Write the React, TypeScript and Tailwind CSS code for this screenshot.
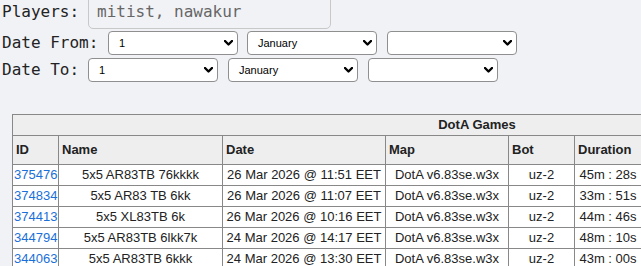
import React from "react";

const mono = { fontFamily: '"DejaVu Sans Mono", monospace' };

function Chevron() {
  return (
    <svg width="9" height="6" viewBox="0 0 9 6" className="shrink-0">
      <path d="M1 1 L4.5 4.5 L8 1" fill="none" stroke="#000" strokeWidth="2.4" strokeLinecap="round" strokeLinejoin="round" />
    </svg>
  );
}

function Sel({ text, className = "" }: { text: string; className?: string }) {
  return (
    <div
      className={`flex h-[24px] w-[130px] items-center justify-between rounded-[4px] border border-[#8f8f8f] bg-white pl-[10px] pr-[4px] text-[11px] text-black ${className}`}
      style={{ fontFamily: '"Liberation Sans", Arial, sans-serif' }}
    >
      <span>{text}</span>
      <Chevron />
    </div>
  );
}

const rows = [
  ["375476", "5x5 AR83TB 76kkkk", "26 Mar 2026 @ 11:51 EET", "45m : 28s"],
  ["374834", "5x5 AR83 TB 6kk", "26 Mar 2026 @ 11:07 EET", "33m : 51s"],
  ["374413", "5x5 XL83TB 6k", "26 Mar 2026 @ 10:16 EET", "44m : 46s"],
  ["344794", "5x5 AR83TB 6lkk7k", "24 Mar 2026 @ 14:17 EET", "48m : 10s"],
  ["344063", "5x5 AR83TB 6kkk", "24 Mar 2026 @ 13:30 EET", "43m : 00s"],
];

export default function App() {
  const th = "border border-[#888] bg-[#eeeeee] py-[6px] pl-[3px] text-left font-bold leading-[16px]";
  const td = "border border-[#888] bg-white px-[1px] py-[2px] text-center leading-[16px]";
  return (
    <div className="h-[266px] w-[641px] overflow-hidden bg-[#f1f2f6] text-[#222]">
      <div className="-mt-[6px] flex h-[35px] items-center text-[16px]" style={mono}>
        <span className="w-[88px] pl-[2px]">Players:</span>
        <div className="flex h-[35px] w-[243px] items-center rounded-[5px] border border-[#c8c8c8] pl-[8px] text-[#666]">
          mitist, nawakur
        </div>
      </div>
      <div className="mt-[2px] flex items-center text-[16px]" style={mono}>
        <span className="w-[108px] pl-[2px]">Date From:</span>
        <Sel text="1" />
        <Sel text="January" className="ml-[9px]" />
        <Sel text="" className="ml-[10px]" />
      </div>
      <div className="mt-[3px] flex items-center text-[16px]" style={mono}>
        <span className="w-[88px] pl-[2px]">Date To:</span>
        <Sel text="1" />
        <Sel text="January" className="ml-[10px]" />
        <Sel text="" className="ml-[10px]" />
      </div>
      <div className="mt-[32px] pl-[12px]">
        <table
          className="w-[929px] table-fixed border-collapse text-[13px] text-[#222]"
          style={{ fontFamily: '"Liberation Sans", Arial, sans-serif' }}
        >
          <colgroup>
            <col className="w-[46px]" />
            <col className="w-[164px]" />
            <col className="w-[163px]" />
            <col className="w-[123px]" />
            <col className="w-[66px]" />
            <col className="w-[67px]" />
            <col className="w-[300px]" />
          </colgroup>
          <thead>
            <tr>
              <th colSpan={7} className="border border-[#888] bg-[#eeeeee] py-[2px] text-center font-bold leading-[16px]">
                DotA Games
              </th>
            </tr>
            <tr>
              <th className={th}>ID</th>
              <th className={th}>Name</th>
              <th className={th}>Date</th>
              <th className={th}>Map</th>
              <th className={th}>Bot</th>
              <th className={th}>Duration</th>
              <th className={th}></th>
            </tr>
          </thead>
          <tbody>
            {rows.map((r) => (
              <tr key={r[0]}>
                <td className={td}>
                  <a href="#" className="text-[#1a6fd8]">{r[0]}</a>
                </td>
                <td className={td}>{r[1]}</td>
                <td className={td}>{r[2]}</td>
                <td className={td}>DotA v6.83se.w3x</td>
                <td className={td}>uz-2</td>
                <td className={td}>{r[3]}</td>
                <td className={td}></td>
              </tr>
            ))}
          </tbody>
        </table>
      </div>
    </div>
  );
}
